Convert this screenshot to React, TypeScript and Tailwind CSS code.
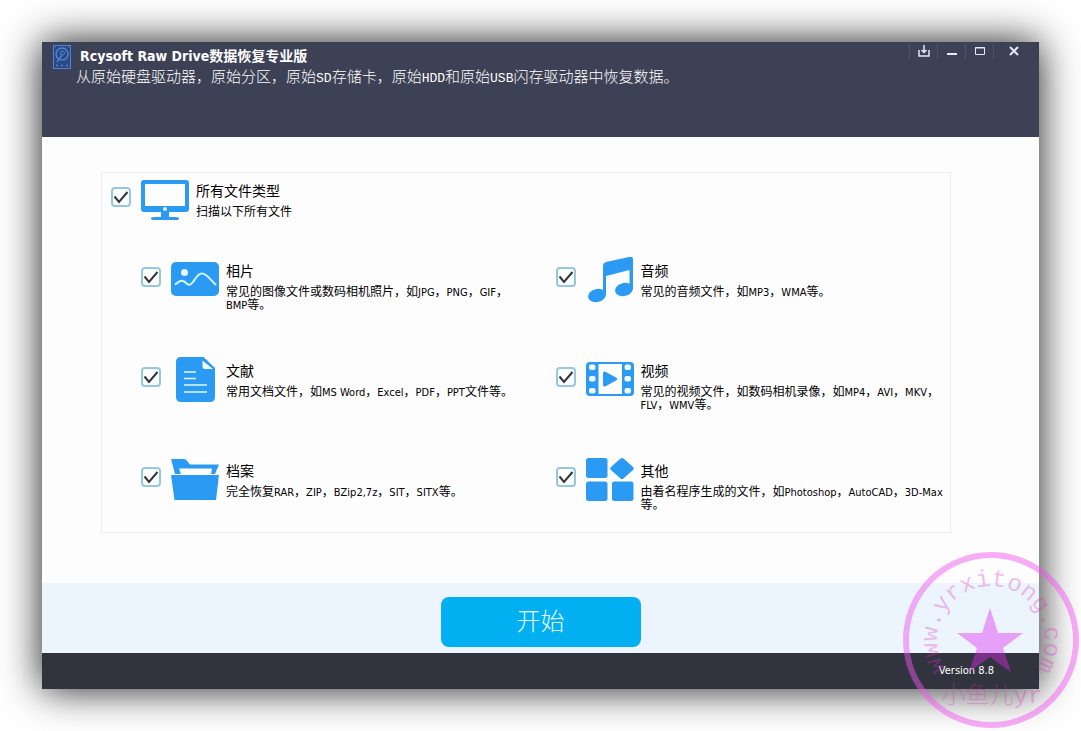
import type { ReactNode } from "react";

const BLUE = "#2b9af3";

function MonitorIcon() {
  return (
    <svg viewBox="0 0 48 41" className="h-[41px] w-12" aria-hidden="true">
      <rect width="48" height="32" rx="3" fill={BLUE} />
      <rect x="4" y="4" width="40" height="22" fill="#fcfdff" />
      <circle cx="24" cy="29" r="2" fill="#dff4ff" />
      <path d="M20 32h8v5h7q3 0 3 1.500t-3 1.500H13q-3 0-3-1.500t3-1.500h7z" fill={BLUE} />
    </svg>
  );
}

function PhotoIcon() {
  return (
    <svg viewBox="0 0 48 34" className="h-[34px] w-12" aria-hidden="true">
      <rect width="48" height="34" rx="5" fill={BLUE} />
      <circle cx="13.500" cy="10.500" r="3.500" fill="#e6fbff" />
      <path d="M4 22.500c3-2 5-4.500 8-3.500 3.500 1 4 4.500 7 3.500 4.500-1.500 6-11 12-11 5 0 8 6 14 11.500" fill="none" stroke="#d3f5ff" strokeWidth="2" />
    </svg>
  );
}

function MusicIcon() {
  return (
    <svg viewBox="0 0 48 48" className="size-12" aria-hidden="true">
      <path d="M17 11q0-3 3-4L43 2q4-1 4 2v30h-3.500V15L20 21v19h-3z" fill={BLUE} />
      <ellipse cx="11" cy="40.500" rx="9" ry="6.500" transform="rotate(-14 11 40.500)" fill={BLUE} />
      <ellipse cx="38" cy="34.500" rx="9" ry="6.500" transform="rotate(-14 38 34.500)" fill={BLUE} />
    </svg>
  );
}

function DocumentIcon() {
  return (
    <svg viewBox="0 0 39 45" className="h-[45px] w-[39px]" aria-hidden="true">
      <path d="M5 0h22.500L39 11v29q0 5-5 5H5q-5 0-5-5V5q0-5 5-5z" fill={BLUE} />
      <path d="M26.500 3.500L37 12H29q-2.500 0-2.500-2.500z" fill="#f3fbff" />
      <path d="M8 15h12M8 21.500h12M8 28h23M8 35h23" stroke="#e2f7ff" strokeWidth="1.500" />
    </svg>
  );
}

function FilmIcon() {
  return (
    <svg viewBox="0 0 48 34" className="h-[34px] w-12" aria-hidden="true">
      <rect width="48" height="34" rx="4" fill={BLUE} />
      <rect x="12.500" y="2" width="23.500" height="30" fill="#fdfeff" />
      <path d="M17 11.500q0-3 3-1.500l10 5.500q2.500 1.500 0 3L20 24q-3 1.500-3-1.500z" fill={BLUE} />
      <g fill="#f1fbff">
        <rect x="3" y="2.500" width="6.500" height="5.500" rx="2" />
        <rect x="3" y="14" width="6.500" height="5.500" rx="2" />
        <rect x="3" y="26" width="6.500" height="5.500" rx="2" />
        <rect x="38.500" y="2.500" width="6.500" height="5.500" rx="2" />
        <rect x="38.500" y="14" width="6.500" height="5.500" rx="2" />
        <rect x="38.500" y="26" width="6.500" height="5.500" rx="2" />
      </g>
    </svg>
  );
}

function FolderIcon() {
  return (
    <svg viewBox="0 0 48 41" className="h-[41px] w-12" aria-hidden="true">
      <path d="M0 0h13q2 0 4 3l2 2.500h29L44 15h-4l1-5.500H8l2 5.500H4z" fill={BLUE} />
      <path d="M0 16h48l-3 25H3.500z" fill={BLUE} />
    </svg>
  );
}

function ShapesIcon() {
  return (
    <svg viewBox="0 0 48 43" className="h-[43px] w-12" aria-hidden="true" fill={BLUE}>
      <rect width="21.500" height="20" rx="2.500" />
      <rect y="23.500" width="21.500" height="19.500" rx="2.500" />
      <rect x="26" y="23.500" width="21.500" height="19.500" rx="2.500" />
      <path d="M34.500.5q1.500-1 3 0L47 9q1.500 1.500 0 3l-9.500 8.500q-1.500 1-3 0L25 12q-1.500-1.500 0-3z" />
    </svg>
  );
}

function DriveIcon() {
  return (
    <svg viewBox="0 0 18 24" className="h-6 w-[18px]" fill="none" stroke="#5083d8" aria-hidden="true">
      <rect x=".5" y=".5" width="17" height="23" fill="#2b4a80" />
      <circle cx="9" cy="9" r="6" strokeWidth="1.500" />
      <circle cx="9.500" cy="8" r="2" />
      <path d="M9 10l-5 7M3 20.500h2M8 20.500h2M13 20.500h2" strokeWidth="1.500" />
      <path d="M2 2h1M15 2h1" />
    </svg>
  );
}

function Tick({ id }: { id: string }) {
  return (
    <span className="grid size-5 shrink-0">
      <input
        id={id}
        type="checkbox"
        defaultChecked
        className="peer col-start-1 row-start-1 size-5 appearance-none rounded-[4px] border-2 border-[#94c8dc] bg-[#fbfdff]"
      />
      <svg
        viewBox="0 0 20 20"
        className="pointer-events-none invisible col-start-1 row-start-1 size-5 peer-checked:visible"
        fill="none"
        stroke="#343438"
        strokeWidth="2"
        aria-hidden="true"
      >
        <path d="M3.500 9.500l4.500 5.500L16.500 5" />
      </svg>
    </span>
  );
}

function Detail({ text }: { text: string }) {
  const runs = text.split(/([A-Za-z0-9][A-Za-z0-9, -]*)/);
  return (
    <span className="block pt-1 text-[12px] leading-[13px] whitespace-pre-line">
      {runs.map((run, i) => (i % 2 ? <span key={i} className="text-[11px]">{run}</span> : run))}
    </span>
  );
}

type Kind = { id: string; title: string; detail: string; icon: ReactNode };

const kinds: Kind[] = [
  { id: "photo", title: "相片", detail: "常见的图像文件或数码相机照片，如JPG，PNG，GIF，\nBMP等。", icon: <PhotoIcon /> },
  { id: "audio", title: "音频", detail: "常见的音频文件，如MP3，WMA等。", icon: <MusicIcon /> },
  { id: "document", title: "文献", detail: "常用文档文件，如MS Word，Excel，PDF，PPT文件等。", icon: <DocumentIcon /> },
  { id: "video", title: "视频", detail: "常见的视频文件，如数码相机录像，如MP4，AVI，MKV，\nFLV，WMV等。", icon: <FilmIcon /> },
  { id: "archive", title: "档案", detail: "完全恢复RAR，ZIP，BZip2,7z，SIT，SITX等。", icon: <FolderIcon /> },
  { id: "other", title: "其他", detail: "由着名程序生成的文件，如Photoshop，AutoCAD，3D-Max\n等。", icon: <ShapesIcon /> },
];

function FileKind({ id, title, detail, icon }: Kind) {
  return (
    <div className="flex items-start">
      <div className="flex h-12 items-center gap-[10px] pb-[6px]">
        <Tick id={id} />
        <span className="grid w-12 shrink-0 place-items-center pt-1">{icon}</span>
      </div>
      <label htmlFor={id} className="min-w-0 flex-1 pt-1 pl-[7px] text-black">
        <span className="block text-[14px] leading-[22px]">{title}</span>
        <Detail text={detail} />
      </label>
    </div>
  );
}

function Mono({ children }: { children: ReactNode }) {
  return <span className="font-['Liberation_Mono','Noto_Sans_CJK_SC',monospace] text-[13px]">{children}</span>;
}

function WindowButtons() {
  const cell = "grid h-4 w-7 place-items-center border-l border-[#4d5368]";
  return (
    <div className="flex text-[#e3e8fb]">
      <button className={cell} aria-label="下载">
        <svg viewBox="0 0 12 12" className="size-3" fill="none" stroke="currentColor" strokeWidth="1.500" aria-hidden="true">
          <path d="M6 0v7M3.500 5L6 7.500 8.500 5M1 5v6h10V5" />
        </svg>
      </button>
      <button className={cell} aria-label="最小化">
        <svg viewBox="0 0 12 12" className="size-3" stroke="currentColor" strokeWidth="2" aria-hidden="true">
          <path d="M1 9h10" />
        </svg>
      </button>
      <button className={cell} aria-label="最大化">
        <svg viewBox="0 0 12 12" className="size-3" fill="none" stroke="currentColor" aria-hidden="true">
          <path d="M1.500 2.500h9v7h-9zM1 3h10" />
        </svg>
      </button>
      <button className="grid h-4 w-10 place-items-center border-l border-[#4d5368]" aria-label="关闭">
        <svg viewBox="0 0 12 12" className="size-3" stroke="currentColor" strokeWidth="2" aria-hidden="true">
          <path d="M2 2l8 8M10 2l-8 8" />
        </svg>
      </button>
    </div>
  );
}

function Stamp() {
  return (
    <svg
      viewBox="0 0 176 176"
      className="pointer-events-none absolute right-[2px] bottom-[3px] size-[176px] font-['Liberation_Mono','Noto_Sans_CJK_SC',monospace]"
    >
      <defs>
        <path id="stamp-arc" d="M88 142A54 54 0 1 1 88.100 142" />
      </defs>
      <circle cx="88" cy="88" r="85" fill="none" stroke="#ee55ee" strokeWidth="6" opacity=".48" />
      <path d="M87 56l8 25h25l-20 15 8 24-21-15-21 15 8-24-20-15h25z" fill="#e02cf0" opacity=".42" />
      <text fontSize="24" textAnchor="middle" fill="#e02cc8" opacity=".3">
        <textPath href="#stamp-arc" startOffset="50%">www.yrxitong.com</textPath>
      </text>
      <text x="89" y="151" fontSize="24" fontWeight="300" textAnchor="middle" fill="#e02cc8" opacity=".3">小鱼儿yr</text>
    </svg>
  );
}

export default function App() {
  return (
    <div className="relative flex min-h-screen flex-col bg-white p-[42px] font-['DejaVu_Sans_Condensed','Noto_Sans_CJK_SC',sans-serif]">
      <div className="flex flex-1 flex-col bg-[#fdfdfe] shadow-[0_0_38px_rgba(0,0,0,0.9)]">
        <header className="flex h-[95px] justify-between border-t border-[#39424e] bg-[#3d4155] pr-[6px] pl-[11px] text-white">
          <div className="flex gap-[5px] pt-[2px]">
            <DriveIcon />
            <div>
              <h1 className="pl-1 text-[14px] leading-[22px] font-bold">Rcysoft Raw Drive数据恢复专业版</h1>
              <p className="text-[15px] leading-5 font-light">
                从原始硬盘驱动器，原始分区，原始<Mono>SD</Mono>存储卡，原始<Mono>HDD</Mono>和原始<Mono>USB</Mono>闪存驱动器中恢复数据。
              </p>
            </div>
          </div>
          <WindowButtons />
        </header>
        <main className="flex-1 pt-[35px] pr-[88px] pb-[50px] pl-[59px]">
          <section className="border border-[#ececf2] pt-[7px] pb-2">
            <div className="flex items-start pl-[9px]">
              <div className="flex items-start gap-[10px]">
                <span className="pt-[7px]"><Tick id="all" /></span>
                <MonitorIcon />
              </div>
              <label htmlFor="all" className="pl-[7px] text-black">
                <span className="block text-[14px] leading-[22px]">所有文件类型</span>
                <Detail text="扫描以下所有文件" />
              </label>
            </div>
            <div className="grid auto-rows-[68px] grid-cols-2 gap-x-6 gap-y-8 pt-[35px] pr-1 pl-[39px]">
              {kinds.map((kind) => (
                <FileKind key={kind.id} {...kind} />
              ))}
            </div>
          </section>
        </main>
        <div className="grid h-[70px] place-items-center bg-[#ecf5fd] pt-2">
          <button className="h-[50px] w-[200px] rounded-lg bg-[#02aff0] text-[24px] font-light text-[#e4faff]">开始</button>
        </div>
        <footer className="flex h-9 items-center justify-end bg-[#31343e] pr-[45px] text-[11px] text-white">Version 8.8</footer>
      </div>
      <Stamp />
    </div>
  );
}
